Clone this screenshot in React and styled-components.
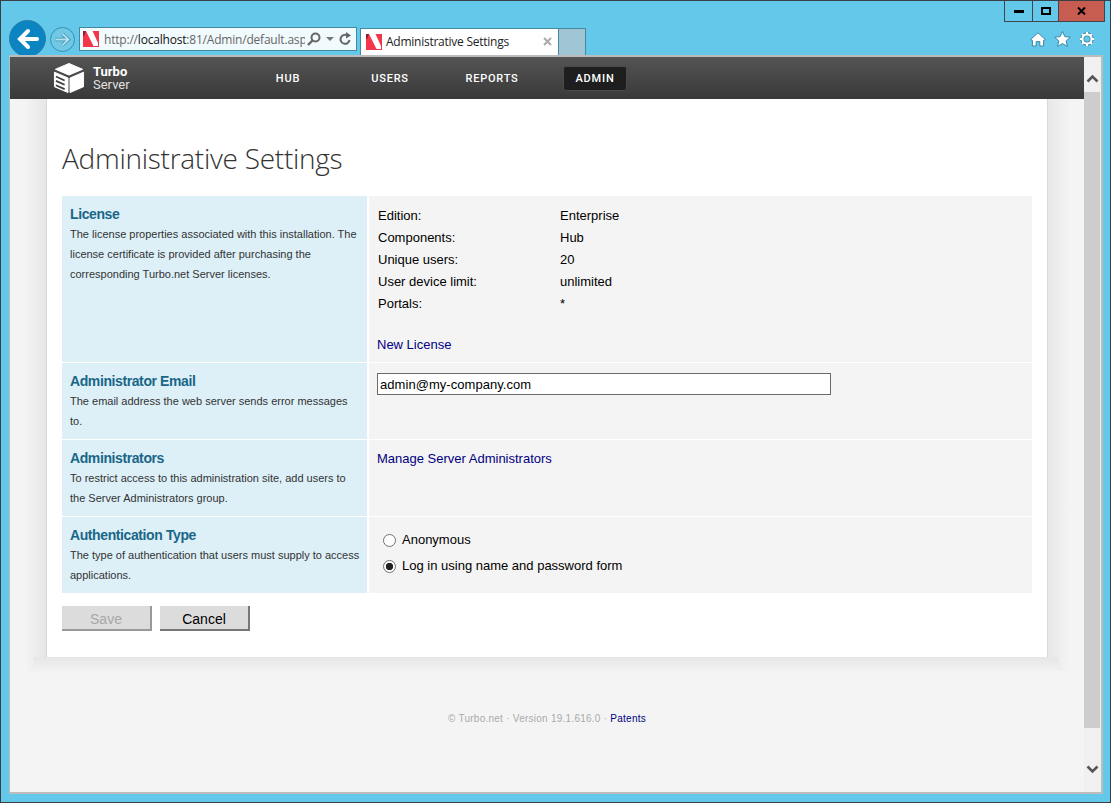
import styled, { createGlobalStyle } from "styled-components";

const GlobalStyle = createGlobalStyle`
  html, body {
    margin: 0;
    padding: 0;
    height: 100%;
    overflow: hidden;
  }
  body {
    font-family: "Liberation Sans", Arial, sans-serif;
  }
`;

const Favicon = ({ size = 16 }) => (
  <svg width={size} height={size} viewBox="0 0 16 16">
    <rect width="16" height="16" fill="#f4364c" />
    <path d="M3 0H9.5L15 12V15H10.5Z" fill="#fff" />
    <path d="M0 0H3L1 5H0Z" fill="#8d1f2c" />
  </svg>
);

const GEAR_TEETH = "M8 .8V3M8 13V15.2M.8 8H3M13 8H15.2M2.9 2.9L4.5 4.5M11.5 11.5L13.1 13.1M13.1 2.9L11.5 4.5M4.5 11.5L2.9 13.1";

const App = () => {
  return (
    <Window>
      <GlobalStyle />
      <Controls>
        <ControlButton $w={27}>
          <svg width="10" height="3"><rect width="10" height="3" fill="#000" /></svg>
        </ControlButton>
        <ControlButton $w={26}>
          <svg width="10" height="8"><rect x="1" y="1" width="8" height="6" fill="none" stroke="#000" strokeWidth="2" /></svg>
        </ControlButton>
        <ControlButton $w={46} $close>
          <svg width="9" height="8" viewBox="0 0 9 8">
            <path d="M1 0.5L8 7.5M8 0.5L1 7.5" stroke="#000" strokeWidth="2" />
          </svg>
        </ControlButton>
      </Controls>

      <Toolbar>
        <BackButton>
          <svg width="24" height="24" viewBox="0 0 24 24">
            <path d="M21 12H5M12 4L4 12L12 20" fill="none" stroke="#fff" strokeWidth="4" strokeLinecap="round" />
          </svg>
        </BackButton>
        <ForwardButton>
          <svg width="17" height="17" viewBox="0 0 17 17">
            <path d="M1.5 8.5H14M8.5 3L14.5 8.5L8.5 14" fill="none" stroke="#3d8fae" strokeWidth="3.4" />
            <path d="M1.5 8.5H14M8.5 3L14.5 8.5L8.5 14" fill="none" stroke="#b5e2f0" strokeWidth="1.8" />
          </svg>
        </ForwardButton>
        <AddressBar>
          <Favicon />
          <AddressText>
            http://<b>localhost</b>:81/Admin/default.aspx
          </AddressText>
          <AddressTools>
            <svg width="14" height="14" viewBox="0 0 14 14">
              <circle cx="8.5" cy="5.5" r="4" fill="none" stroke="#666" strokeWidth="2" />
              <path d="M5.5 8.5L1 13" stroke="#666" strokeWidth="2.4" />
            </svg>
            <svg width="8" height="5" viewBox="0 0 8 5"><path d="M0 0H8L4 4Z" fill="#777" /></svg>
            <svg width="13" height="14" viewBox="0 0 13 14">
              <path d="M10.5 8A4.5 4.5 0 1 1 8 3.2" fill="none" stroke="#666" strokeWidth="2" />
              <path d="M7 0L12 3.5L7 6.5Z" fill="#666" />
            </svg>
          </AddressTools>
        </AddressBar>
        <Tab>
          <Favicon />
          <TabTitle>Administrative Settings</TabTitle>
          <svg width="9" height="9" viewBox="0 0 9 9">
            <path d="M1 1L8 8M8 1L1 8" stroke="#aaa" strokeWidth="2" />
          </svg>
        </Tab>
        <NewTab />
        <ChromeIcons>
          <svg width="16" height="15" viewBox="0 0 16 15">
            <path d="M8 .8L15.4 7.6 13.6 8.4V14H9.8V9.6H6.2V14H2.4V8.4L.6 7.6Z" fill="#fff" stroke="#2f7d9e" strokeWidth=".9" />
          </svg>
          <svg width="17" height="16" viewBox="0 0 17 16">
            <path d="M8.5.5L10.8 5.6 16.3 6.2 12.2 9.9 13.4 15.4 8.5 12.6 3.6 15.4 4.8 9.9.7 6.2 6.2 5.6Z" fill="#fff" stroke="#2f7d9e" strokeWidth=".9" />
          </svg>
          <svg width="16" height="16" viewBox="0 0 16 16">
            <circle cx="8" cy="8" r="4.6" fill="none" stroke="#2f7d9e" strokeWidth="3.6" />
            <path d={GEAR_TEETH} stroke="#2f7d9e" strokeWidth="3" />
            <circle cx="8" cy="8" r="4.6" fill="none" stroke="#fff" strokeWidth="2.2" />
            <path d={GEAR_TEETH} stroke="#fff" strokeWidth="2" />
          </svg>
        </ChromeIcons>
      </Toolbar>

      <Viewport>
        <PageArea>
          <Header>
            <Brand>
              <svg width="32" height="32" viewBox="0 0 33 33">
                <path d="M16.5 1.5L30.5 7.5 16.5 13.5 2.5 7.5Z" fill="#fff" stroke="#fff" strokeLinejoin="round" />
                <path d="M1.5 10.5L15.5 16.5V31.5L1.5 25.5Z" fill="#fff" stroke="#fff" strokeLinejoin="round" />
                <path d="M17.5 16.5L31.5 10.5V25.5L17.5 31.5Z" fill="#fff" stroke="#fff" strokeLinejoin="round" />
                <path d="M3 15L12 19M3 19.5L12 23.5M3 24L12 28" stroke="#3f3f3f" strokeWidth="1.8" />
              </svg>
              <BrandName>
                <b>Turbo</b>
                <span>Server</span>
              </BrandName>
            </Brand>
            <Nav>
              <NavItem $width={50}>HUB</NavItem>
              <NavItem $width={64} $gap={45}>USERS</NavItem>
              <NavItem $width={80} $gap={30}>REPORTS</NavItem>
              <NavItem $width={64} $gap={31} $active>ADMIN</NavItem>
            </Nav>
          </Header>

          <Content>
            <Card>
              <Title>Administrative Settings</Title>
              <SettingsGrid>
                <InfoCell $height={166}>
                  <InfoTitle>License</InfoTitle>
                  <InfoText>
                    The license properties associated with this installation. The license certificate is provided
                    after purchasing the corresponding Turbo.net Server licenses.
                  </InfoText>
                </InfoCell>
                <ValueCell>
                  <LicenseTable>
                    <span>Edition:</span><span>Enterprise</span>
                    <span>Components:</span><span>Hub</span>
                    <span>Unique users:</span><span>20</span>
                    <span>User device limit:</span><span>unlimited</span>
                    <span>Portals:</span><span>*</span>
                  </LicenseTable>
                  <LicenseLink href="#">New License</LicenseLink>
                </ValueCell>

                <InfoCell $height={76}>
                  <InfoTitle>Administrator Email</InfoTitle>
                  <InfoText>The email address the web server sends error messages to.</InfoText>
                </InfoCell>
                <ValueCell>
                  <EmailInput defaultValue="admin@my-company.com" />
                </ValueCell>

                <InfoCell $height={76}>
                  <InfoTitle>Administrators</InfoTitle>
                  <InfoText>
                    To restrict access to this administration site, add users to the Server Administrators group.
                  </InfoText>
                </InfoCell>
                <ValueCell>
                  <PlainLink href="#">Manage Server Administrators</PlainLink>
                </ValueCell>

                <InfoCell $height={76}>
                  <InfoTitle>Authentication Type</InfoTitle>
                  <InfoText>The type of authentication that users must supply to access applications.</InfoText>
                </InfoCell>
                <ValueCell>
                  <RadioList>
                    <RadioRow>
                      <Radio type="radio" name="auth" />
                      Anonymous
                    </RadioRow>
                    <RadioRow>
                      <Radio type="radio" name="auth" defaultChecked />
                      Log in using name and password form
                    </RadioRow>
                  </RadioList>
                </ValueCell>
              </SettingsGrid>
              <Buttons>
                <ActionButton disabled>Save</ActionButton>
                <ActionButton>Cancel</ActionButton>
              </Buttons>
            </Card>
            <Footer>
              © Turbo.net · Version 19.1.616.0 · <a href="#">Patents</a>
            </Footer>
          </Content>
        </PageArea>

        <Scrollbar>
          <svg width="13" height="9" viewBox="0 0 13 9">
            <path d="M1.5 7.5L6.5 2.5L11.5 7.5" fill="none" stroke="#555" strokeWidth="2.6" />
          </svg>
          <Thumb />
          <svg width="13" height="9" viewBox="0 0 13 9">
            <path d="M1.5 1.5L6.5 6.5L11.5 1.5" fill="none" stroke="#555" strokeWidth="2.6" />
          </svg>
        </Scrollbar>
      </Viewport>
    </Window>
  );
};

const Window = styled.div`
  position: relative;
  box-sizing: border-box;
  width: 1111px;
  height: 803px;
  padding: 0 7px 8px 8px;
  background: #63c8e9;
  border: 1px solid #3a3f44;
  display: flex;
  flex-direction: column;
  overflow: hidden;
`;

const Controls = styled.div`
  position: absolute;
  top: 0;
  left: 1003px;
  display: flex;
  height: 21px;
  border: 1px solid #3f4548;
  border-top: 0;
  box-sizing: border-box;
`;

const ControlButton = styled.div`
  box-sizing: border-box;
  width: ${(p) => p.$w}px;
  display: flex;
  align-items: center;
  justify-content: center;
  background: ${(p) => (p.$close ? "#c75c50" : "transparent")};
  & + & {
    border-left: 1px solid #3f4548;
  }
`;

const Toolbar = styled.div`
  height: 54px;
  flex: none;
  display: flex;
  align-items: flex-end;
`;

const BackButton = styled.div`
  box-sizing: border-box;
  width: 37px;
  height: 37px;
  margin-bottom: -2px;
  border-radius: 50%;
  background: #0a85c2;
  border: 1px solid #2b7fa3;
  display: flex;
  align-items: center;
  justify-content: center;
  flex: none;
`;

const ForwardButton = styled.div`
  box-sizing: border-box;
  width: 25px;
  height: 25px;
  margin: 0 4px 3px 4px;
  border-radius: 50%;
  border: 1px solid #3d8fae;
  background: #6fc9e6;
  display: flex;
  align-items: center;
  justify-content: center;
  flex: none;
`;

const AddressBar = styled.div`
  box-sizing: border-box;
  width: 278px;
  height: 24px;
  margin-bottom: 4px;
  background: #f1fafd;
  border: 1px solid #44899f;
  display: flex;
  align-items: center;
  padding: 0 3px;
  gap: 5px;
  flex: none;
`;

const AddressText = styled.div`
  width: 201px;
  overflow: hidden;
  white-space: nowrap;
  font-family: "Open Sans", sans-serif;
  font-size: 12px;
  letter-spacing: -0.2px;
  color: #666;
  flex: none;
  b {
    font-weight: 400;
    color: #111;
  }
`;

const AddressTools = styled.div`
  display: flex;
  align-items: center;
  gap: 5px;
  margin-left: -3px;
`;

const Tab = styled.div`
  box-sizing: border-box;
  width: 199px;
  height: 27px;
  margin-left: 3px;
  padding: 0 6px 1px 5px;
  background: #fff;
  border: 1px solid #44899f;
  border-bottom: 0;
  display: flex;
  align-items: center;
  gap: 4px;
  flex: none;
`;

const TabTitle = styled.div`
  flex: 1;
  font-family: "Open Sans", sans-serif;
  font-size: 12px;
  letter-spacing: -0.25px;
  color: #222;
  white-space: nowrap;
`;

const NewTab = styled.div`
  box-sizing: border-box;
  width: 27px;
  height: 27px;
  background: #a0c6d5;
  border: 1px solid #44899f;
  border-left: 0;
  border-bottom: 0;
  flex: none;
`;

const ChromeIcons = styled.div`
  margin-left: auto;
  margin-bottom: 8px;
  margin-right: 8px;
  display: flex;
  align-items: center;
  gap: 8px;
`;

const Viewport = styled.div`
  position: relative;
  flex: 1;
  min-height: 0;
  display: flex;
  background: #f4f4f4;
  border: 1px solid #bcbcbc;
  border-width: 2px 2px 2px 1px;
`;

const PageArea = styled.div`
  flex: 1;
  min-width: 0;
  display: flex;
  flex-direction: column;
`;

const Header = styled.div`
  height: 42px;
  flex: none;
  display: flex;
  align-items: center;
  padding-left: 43px;
  background: linear-gradient(#545454, #393939);
`;

const Brand = styled.div`
  display: flex;
  align-items: center;
  gap: 8px;
  width: 210px;
  flex: none;
`;

const BrandName = styled.div`
  display: flex;
  flex-direction: column;
  font-family: Roboto, sans-serif;
  font-size: 13px;
  line-height: 13px;
  color: #e0e0e0;
  b {
    color: #fff;
    font-weight: 700;
  }
`;

const Nav = styled.div`
  display: flex;
  align-items: center;
`;

const NavItem = styled.div`
  box-sizing: border-box;
  width: ${(p) => p.$width}px;
  height: 25px;
  margin-left: ${(p) => p.$gap || 0}px;
  display: flex;
  align-items: center;
  justify-content: center;
  font-family: Roboto, sans-serif;
  font-size: 11px;
  font-weight: 500;
  letter-spacing: 0.8px;
  color: #fff;
  border-radius: 3px;
  background: ${(p) => (p.$active ? "#1e1e1e" : "transparent")};
  border: ${(p) => (p.$active ? "1px solid #4a4a4a" : "0")};
`;

const Content = styled.div`
  flex: 1;
  min-height: 0;
  display: flex;
  flex-direction: column;
  align-items: center;
`;

const Card = styled.div`
  position: relative;
  box-sizing: border-box;
  width: 1002px;
  height: 559px;
  padding: 40px 16px 0 15px;
  background: #fff;
  border: 1px solid #d8d8d8;
  border-top: 0;
  flex: none;
  &::before {
    content: "";
    position: absolute;
    top: 0;
    bottom: -14px;
    left: -22px;
    right: -24px;
    z-index: 0;
    background: linear-gradient(to right, #f4f4f4 0, #e6e6e6 21px, transparent 21px,
      transparent calc(100% - 23px), #e8e8e8 calc(100% - 23px), #f4f4f4 100%);
  }
  &::after {
    content: "";
    position: absolute;
    top: 100%;
    left: -13px;
    right: -12px;
    height: 17px;
    background: linear-gradient(#e6e6e6, #f4f4f4);
  }
  & > * {
    position: relative;
  }
`;

const Title = styled.h1`
  margin: 0 0 18px;
  font-family: "Open Sans", sans-serif;
  font-weight: 300;
  font-size: 28px;
  line-height: 39px;
  letter-spacing: -0.27px;
  color: #333;
`;

const SettingsGrid = styled.div`
  display: grid;
  grid-template-columns: 305px 663px;
  gap: 1px 2px;
`;

const InfoCell = styled.div`
  box-sizing: border-box;
  height: ${(p) => p.$height}px;
  padding: 8px 6px 0 8px;
  background: #ddf0f8;
`;

const InfoTitle = styled.div`
  font-size: 14px;
  line-height: 20px;
  font-weight: 700;
  letter-spacing: -0.4px;
  color: #1a6688;
`;

const InfoText = styled.div`
  font-size: 11px;
  line-height: 20px;
  color: #333;
`;

const ValueCell = styled.div`
  box-sizing: border-box;
  padding: 8px 8px 0;
  background: #f4f4f4;
  font-size: 13px;
  color: #000;
`;

const LicenseTable = styled.div`
  display: grid;
  grid-template-columns: 182px 1fr;
  grid-auto-rows: 22px;
  align-items: center;
  padding: 0 0 0 1px;
`;

const LicenseLink = styled.a`
  display: block;
  margin-top: 21px;
  line-height: 20px;
  color: #000080;
  text-decoration: none;
`;

const PlainLink = styled.a`
  display: block;
  line-height: 20px;
  margin-top: 1px;
  color: #000080;
  text-decoration: none;
`;

const EmailInput = styled.input`
  display: block;
  box-sizing: border-box;
  width: 454px;
  height: 22px;
  margin-top: 2px;
  padding: 0 2px;
  border: 1px solid #6a6a6a;
  border-radius: 0;
  outline: none;
  background: #fff;
  font-family: "Liberation Sans", sans-serif;
  font-size: 13px;
  letter-spacing: 0.05px;
  color: #000;
`;

const RadioList = styled.div`
  display: flex;
  flex-direction: column;
  gap: 6px;
  margin-top: 4px;
  padding-left: 6px;
`;

const RadioRow = styled.label`
  display: flex;
  align-items: center;
  gap: 6px;
  height: 20px;
`;

const Radio = styled.input`
  appearance: none;
  margin: 0;
  width: 13px;
  height: 13px;
  border-radius: 50%;
  border: 1px solid #707070;
  background: #fff;
  position: relative;
  top: 1px;
  &:checked {
    background: radial-gradient(circle, #222 0, #222 3.4px, #fff 4px);
  }
`;

const Buttons = styled.div`
  display: flex;
  gap: 8px;
  margin-top: 13px;
`;

const ActionButton = styled.button`
  box-sizing: border-box;
  width: 90px;
  height: 25px;
  padding: 2px 0 0;
  background: #dcdcdc;
  border: 0;
  border-right: 2px solid #777;
  border-bottom: 2px solid #777;
  font-family: "Liberation Sans", sans-serif;
  font-size: 14px;
  color: #000;
  &:disabled {
    color: #a8a8a8;
    border-color: #999;
  }
`;

const Footer = styled.div`
  margin-top: 55px;
  font-size: 10px;
  line-height: 12px;
  letter-spacing: 0.25px;
  color: #aaa;
  a {
    color: #000080;
    text-decoration: none;
  }
`;

const Scrollbar = styled.div`
  position: relative;
  box-sizing: border-box;
  width: 17px;
  flex: none;
  display: flex;
  flex-direction: column;
  align-items: center;
  padding: 17px 0 18px;
  background: #f0f0f0;
`;

const Thumb = styled.div`
  align-self: stretch;
  height: 638px;
  margin: 9px 1px 37px 0;
  background: #cdcdcd;
`;

export default App;
